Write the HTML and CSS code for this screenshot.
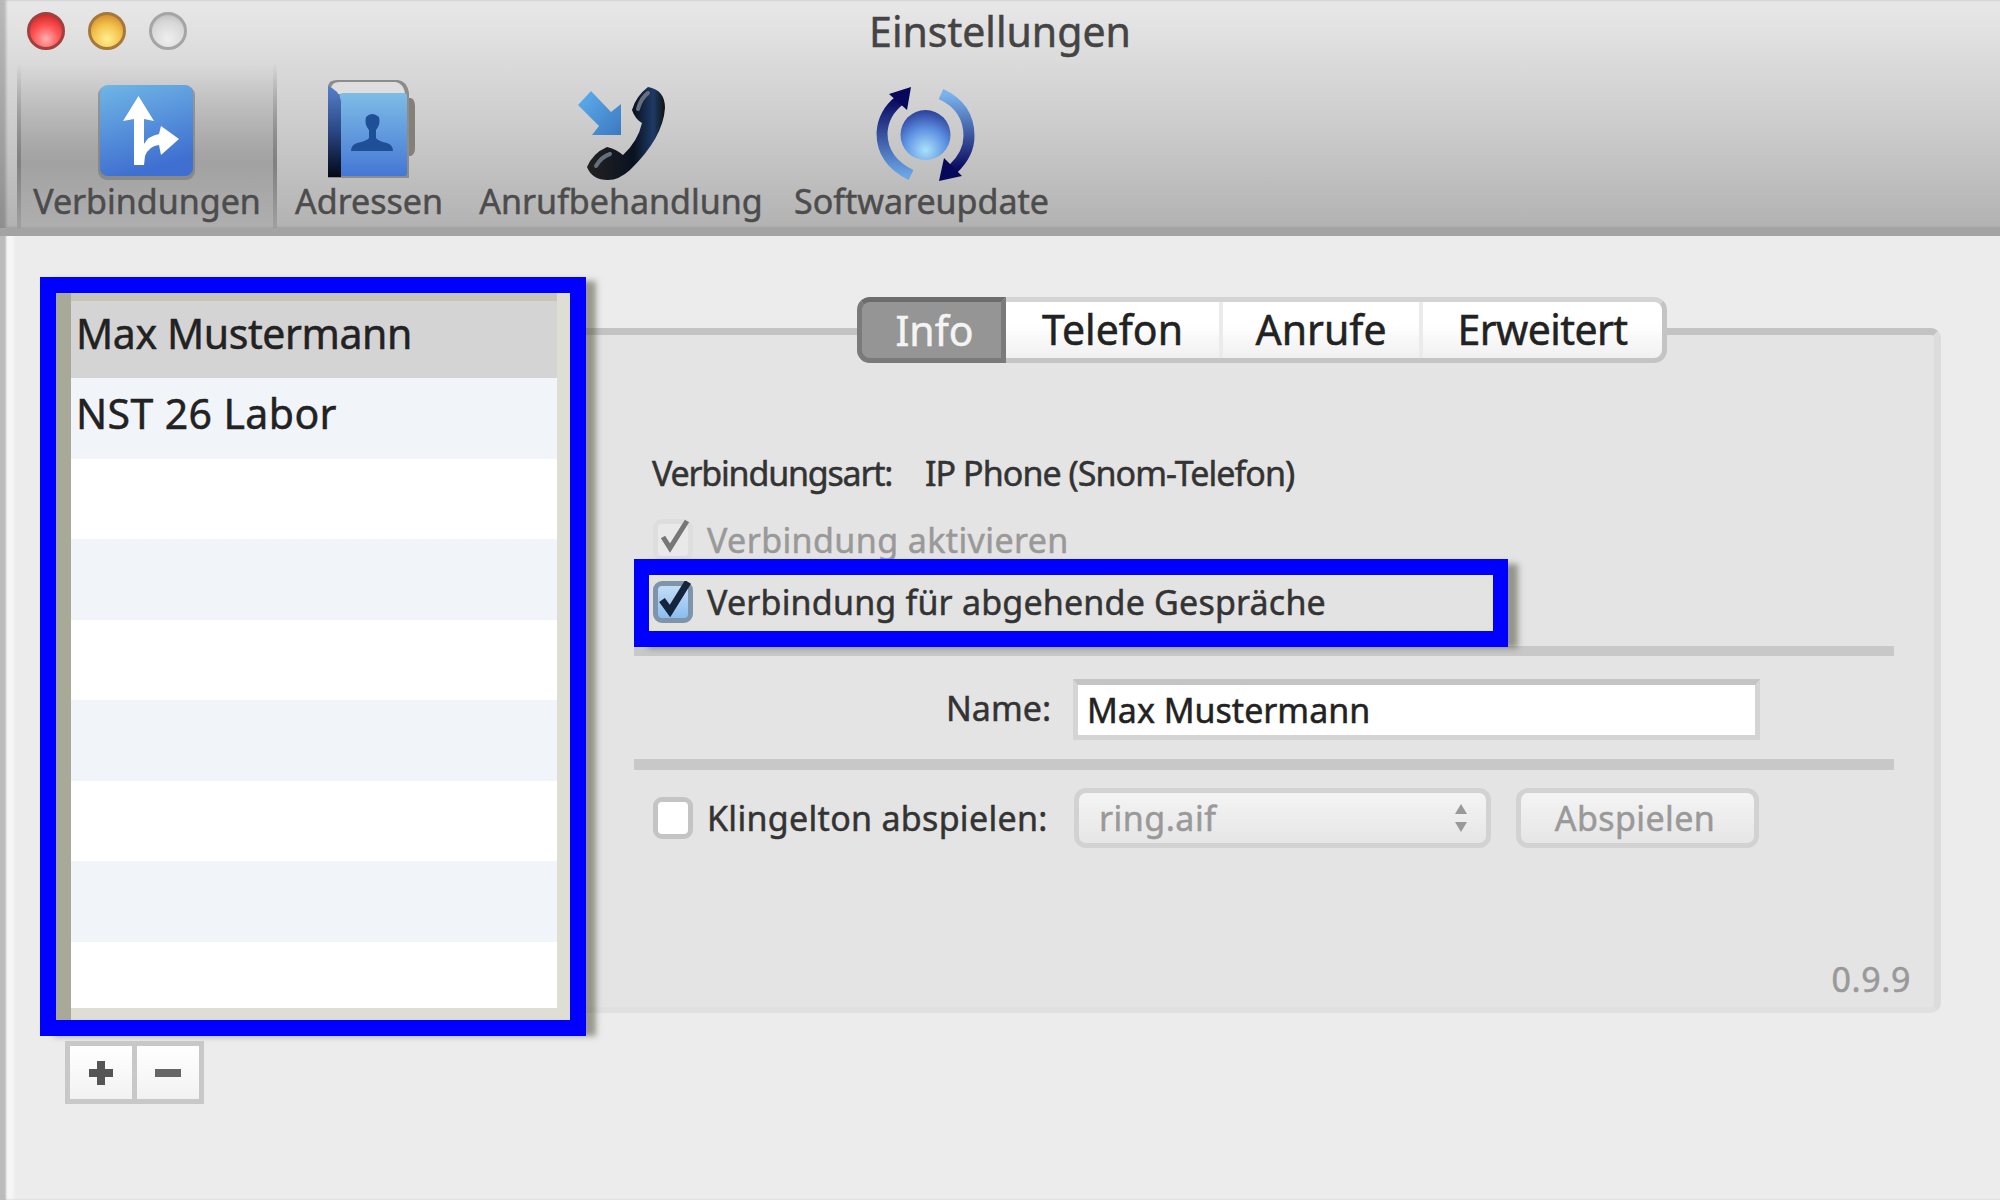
FILE: index.html
```
<!DOCTYPE html>
<html lang="de">
<head>
    <meta charset="UTF-8">
    <title>Einstellungen</title>
    <link rel="stylesheet" href="styles.css">
</head>
<body>
    <div class="window">
        <header class="header">
            <div class="titlebar">
                <div class="lights">
                    <span class="light red"></span>
                    <span class="light yellow"></span>
                    <span class="light gray"></span>
                </div>
                <h1 class="title">Einstellungen</h1>
            </div>
            <nav class="toolbar">
                <div class="tool tool-connections selected">
                    <svg class="icon" viewBox="0 0 110 110">
                        <defs>
                            <linearGradient id="sign" x1="0" y1="0" x2="0.3" y2="1">
                                <stop offset="0" stop-color="#6fb6e6"/>
                                <stop offset="1" stop-color="#3f6fd0"/>
                            </linearGradient>
                        </defs>
                        <rect x="6" y="10" width="97" height="94" rx="9" fill="#777" opacity="0.6"/>
                        <rect x="8" y="9" width="93" height="91" rx="8" fill="url(#sign)"/>
                        <path d="M46.5 20 L62 45 L52 43 L52 68 Q56 60 67 58 L69 50 L87 63 L69 79 L67 69 Q57 70 53 80 L52 89 L42 89 L42 43 L31 45 Z" fill="#fff"/>
                    </svg>
                    <span class="label">Verbindungen</span>
                </div>
                <div class="tool tool-addresses">
                    <svg class="icon" viewBox="0 0 110 110">
                        <defs>
                            <linearGradient id="cover" x1="0" y1="0" x2="0" y2="1">
                                <stop offset="0" stop-color="#7fbce6"/>
                                <stop offset="1" stop-color="#4477d4"/>
                            </linearGradient>
                            <linearGradient id="spine" x1="0" y1="0" x2="0" y2="1">
                                <stop offset="0" stop-color="#5580cc"/>
                                <stop offset="0.5" stop-color="#2b4684"/>
                                <stop offset="1" stop-color="#020816"/>
                            </linearGradient>
                        </defs>
                        <path d="M94 22 h3 q4 2 4 8 v42 q0 6 -4 8 h-3 z" fill="#847f79"/>
                        <path d="M14 10 Q15 4 23 4 H84 Q93 5 95 17 V102 H14 Z" fill="#8c8c8c"/>
                        <path d="M17 12 Q18 6 25 6 H82 Q90 8 91 18 H20 Z" fill="#dedede"/>
                        <rect x="26" y="17" width="67" height="83" rx="3" fill="url(#cover)"/>
                        <path d="M14 10 Q25 14 27 25 V101 H14 Z" fill="url(#spine)"/>
                        <path d="M52 41 Q58 35 65 41 Q67 48 62 54 V62 Q64 65 73 67 Q79 69 79 75 H37 Q37 69 43 67 Q53 65 55 62 V54 Q50 48 52 41 Z" fill="#1f4f96"/>
                    </svg>
                    <span class="label">Adressen</span>
                </div>
                <div class="tool tool-calls">
                    <svg class="icon" viewBox="0 0 110 110">
                        <defs>
                            <linearGradient id="arrow" x1="0" y1="0" x2="1" y2="1">
                                <stop offset="0" stop-color="#5fb0ee"/>
                                <stop offset="1" stop-color="#3c78c0"/>
                            </linearGradient>
                            <linearGradient id="phone" x1="0" y1="0" x2="1" y2="0">
                                <stop offset="0" stop-color="#222"/>
                                <stop offset="0.6" stop-color="#0a1220"/>
                                <stop offset="0.85" stop-color="#1d3a66"/>
                                <stop offset="1" stop-color="#111"/>
                            </linearGradient>
                        </defs>
                        <path d="M25 15 L45 36 L55 28 V59 H26 L33 50 L12 29 Z" fill="url(#arrow)"/>
                        <path d="M82 11 Q99 14 99 32 Q97 62 64 94 Q53 104 42 104 Q26 104 21 91 Q27 77 41 71 Q50 73 57 79 Q72 65 76 47 Q69 43 66 34 Q70 20 82 11 Z" fill="url(#phone)"/>
                        <path d="M72 33 Q75 22 82 17 M30 90 Q35 81 44 78" stroke="#66707c" stroke-width="4" fill="none" stroke-linecap="round"/>
                    </svg>
                    <span class="label">Anrufbehandlung</span>
                </div>
                <div class="tool tool-update">
                    <svg class="icon" viewBox="0 0 110 110">
                        <defs>
                            <radialGradient id="ball" cx="0.5" cy="0.8" r="0.8">
                                <stop offset="0" stop-color="#a9e2fb"/>
                                <stop offset="0.55" stop-color="#5b8ee0"/>
                                <stop offset="1" stop-color="#2b3f98"/>
                            </radialGradient>
                            <linearGradient id="arcLeft" x1="0" y1="0" x2="0" y2="1">
                                <stop offset="0" stop-color="#0a0a60"/>
                                <stop offset="1" stop-color="#6aa5e6"/>
                            </linearGradient>
                            <linearGradient id="arcRight" x1="0" y1="0" x2="0" y2="1">
                                <stop offset="0" stop-color="#7ab4ee"/>
                                <stop offset="1" stop-color="#0a0a60"/>
                            </linearGradient>
                        </defs>
                        <circle cx="58.5" cy="59" r="25" fill="url(#ball)"/>
                        <path d="M44 99 Q15 85 15 57 Q16 37 33 24" stroke="url(#arcLeft)" stroke-width="11" fill="none"/>
                        <path d="M74 18 Q102 31 102 60 Q102 78 86 93" stroke="url(#arcRight)" stroke-width="11" fill="none"/>
                        <path d="M44 11 L22 18 L40 34 Z" fill="#08085a"/>
                        <path d="M72 105 L95 100 L77 82 Z" fill="#08085a"/>
                    </svg>
                    <span class="label">Softwareupdate</span>
                </div>
            </nav>
        </header>

        <main class="content">
            <aside class="sidebar">
                <div class="list-frame">
                    <ul class="list">
                        <li class="active">Max Mustermann</li>
                        <li class="second">NST 26 Labor</li>
                        <li></li>
                        <li></li>
                        <li></li>
                        <li></li>
                        <li></li>
                        <li></li>
                        <li></li>
                    </ul>
                </div>
                <div class="list-buttons">
                    <button type="button" aria-label="Hinzufügen">
                        <svg width="28" height="28" viewBox="0 0 28 28"><path d="M14 2 V26 M2 14 H26" stroke="#555" stroke-width="8"/></svg>
                    </button>
                    <button type="button" aria-label="Entfernen">
                        <svg width="28" height="28" viewBox="0 0 28 28"><path d="M1 14 H27" stroke="#666" stroke-width="8"/></svg>
                    </button>
                </div>
            </aside>

            <section class="panel">
                <div class="tabs">
                    <span class="tab tab-info">Info</span>
                    <span class="tab tab-phone">Telefon</span>
                    <span class="tab tab-calls">Anrufe</span>
                    <span class="tab tab-more">Erweitert</span>
                </div>

                <div class="row row-type">
                    <span class="type-label">Verbindungsart:</span>
                    <span class="type-value">IP Phone (Snom-Telefon)</span>
                </div>

                <div class="row row-check disabled">
                    <span class="box box-disabled">
                        <svg viewBox="0 0 40 44"><path d="M10 18 L17 29 L34 2" stroke="#777" stroke-width="5" fill="none"/></svg>
                    </span>
                    <span class="check-text text-activate">Verbindung aktivieren</span>
                </div>

                <div class="row highlight">
                    <span class="box box-checked">
                        <svg viewBox="0 0 40 44"><path d="M9 19 L17 30 L35 1" stroke="#14243c" stroke-width="7" fill="none"/></svg>
                    </span>
                    <span class="check-text text-outgoing">Verbindung für abgehende Gespräche</span>
                </div>

                <div class="line line-top"></div>

                <div class="row row-name">
                    <label class="name-label" for="name">Name:</label>
                    <input class="name-input" type="text" id="name" value="Max Mustermann">
                </div>

                <div class="line line-bottom"></div>

                <div class="row row-ring">
                    <span class="box box-empty"></span>
                    <span class="check-text text-ring">Klingelton abspielen:</span>
                    <div class="select">
                        <span>ring.aif</span>
                        <svg width="14" height="30" viewBox="0 0 14 30"><path d="M7 1 L13 11 H1 Z M7 29 L13 19 H1 Z" fill="#999"/></svg>
                    </div>
                    <button class="play" type="button">Abspielen</button>
                </div>

                <div class="version">0.9.9</div>
            </section>
        </main>
    </div>
</body>
</html>
```
FILE: styles.css
```
* {
    box-sizing: border-box;
}

body {
    margin: 0;
    font-family: "Lucida Grande", "Noto Sans", sans-serif;
    font-size: 34px;
    color: #333;
    -webkit-text-stroke: 0.5px;
}

.window {
    width: 2000px;
    height: 1200px;
    overflow: hidden;
    background-color: #ececec;
    box-shadow: inset 6px 0 2px #bbb, inset 14px 0 3px #f6f6f6;
}

/* Title bar and toolbar */
.header {
    height: 236px;
    background: linear-gradient(#e8e8e8, #cfcfcf 50%, #b2b2b2);
    border-bottom: 8px solid #a3a3a3;
    box-shadow: inset 6px 0 3px rgba(0, 0, 0, 0.2);
}

.titlebar {
    display: grid;
    grid-template-columns: 1fr auto 1fr;
    height: 64px;
}

.lights {
    display: flex;
    gap: 23px;
    padding: 12px 0 0 27px;
}

.light {
    width: 38px;
    height: 38px;
    border-radius: 50%;
    border: 3px solid #999;
}

.red {
    background: radial-gradient(circle at 50% 75%, #ffb0b0, #f55 45%, #c01818);
    border-color: #a04040;
}

.yellow {
    background: radial-gradient(circle at 50% 75%, #fff090, #f3c14c 50%, #c67a20);
    border-color: #a5793c;
}

.gray {
    background: radial-gradient(circle at 50% 75%, #efefef, #d8d8d8 60%, #b4b4b4);
    border-color: #a5a5a5;
}

.title {
    margin: 0;
    font-size: 41px;
    font-weight: normal;
    line-height: 62px;
    color: #444;
}

.toolbar {
    display: flex;
    height: 164px;
    padding-left: 17px;
}

.tool {
    display: flex;
    flex-direction: column;
    align-items: center;
    padding-top: 12px;
    color: #4c4c4c;
}

.tool-connections { width: 260px; }
.tool-addresses { width: 184px; }
.tool-calls { width: 320px; }
.tool-update { width: 281px; }

.selected {
    background: linear-gradient(rgba(150, 150, 150, 0), rgba(150, 150, 150, 0.75) 60%, rgba(170, 170, 170, 0.5));
    border-left: 4px solid;
    border-right: 4px solid;
    border-image: linear-gradient(rgba(120, 120, 120, 0), rgba(120, 120, 120, 0.8) 60%, rgba(140, 140, 140, 0.4)) 1;
}

.icon {
    width: 110px;
    height: 110px;
}

.label {
    line-height: 30px;
    white-space: nowrap;
}

/* Connection list */
.content {
    display: flex;
    padding: 41px 0 0 40px;
}

.sidebar {
    position: relative;
    z-index: 1;
    width: 546px;
}

.list-frame {
    height: 759px;
    padding: 0 13px 12px 15px;
    border: 16px solid #00f;
    background: linear-gradient(to right, #a9a99a 15px, #deded4 15px);
    box-shadow: 12px 2px 6px -2px rgba(70, 70, 50, 0.5);
}

.list {
    height: 100%;
    margin: 0;
    padding: 0;
    list-style: none;
    overflow: hidden;
    font-size: 41px;
    color: #222;
}

.list li {
    height: 80.5px;
    padding-left: 5px;
    line-height: 70px;
    letter-spacing: -0.4px;
    background-color: #fff;
}

.list li:nth-child(even) {
    background-color: #f1f5fa;
}

.list li.active {
    height: 85px;
    line-height: 65px;
    background-color: #d4d4d4;
    border-top: 8px solid #c6c6ba;
}

.list li.second {
    letter-spacing: 0.4px;
}

.list-buttons {
    display: flex;
    width: 139px;
    height: 63px;
    margin: 5px 0 0 25px;
    border: 5px solid #c8c8c8;
}

.list-buttons button {
    flex: 1;
    display: flex;
    align-items: center;
    justify-content: center;
    padding: 0;
    border: none;
    background: linear-gradient(#fff, #f2f2f2);
}

.list-buttons button + button {
    border-left: 5px solid #c8c8c8;
}

/* Settings panel */
.panel {
    display: flex;
    flex-direction: column;
    width: 1355px;
    height: 685px;
    margin-top: 51px;
    padding: 0 40px 0 48px;
    background-color: #e4e4e4;
    border-top: 7px solid #c3c3c3;
    border-right: 7px solid #dcdcdc;
    border-bottom: 6px solid #e0e0e0;
    border-radius: 0 10px 10px 0;
}

.tabs {
    display: flex;
    flex: none;
    width: 810px;
    height: 66px;
    margin: -38px 0 83px 223px;
    border: 5px solid #c4c4c4;
    border-top-color: #d4d4d4;
    border-left: none;
    border-radius: 13px;
    background: linear-gradient(#fff 40%, #f0f0f0);
    font-size: 41px;
    line-height: 55px;
    text-align: center;
    color: #222;
}

.tab + .tab + .tab {
    border-left: 4px solid #ebebeb;
}

.tab-info {
    width: 149px;
    margin: -5px 0;
    padding: 1px 0 0 6px;
    border: 5px solid #7a7a7a;
    border-top-color: #6c6c6c;
    border-radius: 13px 0 0 13px;
    background-color: #959595;
    color: #f4f4f4;
}

.tab-phone { width: 213px; }
.tab-calls { width: 200px; }

.tab-more {
    flex: 1;
    letter-spacing: -0.6px;
}

.row {
    display: flex;
    flex: none;
    align-items: center;
    white-space: nowrap;
}

.row-type {
    height: 54px;
    padding-left: 18px;
}

.type-label {
    width: 273px;
    letter-spacing: -1.2px;
}

.type-value {
    letter-spacing: -0.95px;
}

.row-check {
    height: 54px;
    margin-top: 13px;
    padding-left: 19px;
}

.disabled {
    color: #999;
}

.text-activate {
    letter-spacing: 0.4px;
}

.text-outgoing {
    letter-spacing: 0.2px;
}

.box {
    flex: none;
    width: 40px;
    height: 42px;
    margin-right: 14px;
    border: 5px solid #c4c4c4;
    border-radius: 9px;
    background-color: #fff;
}

.box svg {
    display: block;
    width: 40px;
    height: 44px;
    margin: -5px;
}

.box-disabled {
    border-color: #dedede;
    background-color: #e9e9e9;
}

.box-checked {
    border-color: #7d94ac;
    background: linear-gradient(#c4ddf5, #8bbdf0);
}

.highlight {
    position: relative;
    width: 874px;
    height: 88px;
    margin-top: -8px;
    padding-left: 4px;
    padding-bottom: 2px;
    border: 16px solid #00f;
    border-width: 16px 15px;
    background-color: #e3e3e3;
    box-shadow: 12px 3px 6px -2px rgba(70, 70, 50, 0.5), inset 0 0 4px 3px #e4e4d0;
}

.line {
    flex: none;
    background-color: #c8c8c8;
}

.line-top {
    height: 10px;
    margin-top: -1px;
}

.line-bottom {
    height: 11px;
    margin: 19px 0 1px;
}

.row-name {
    height: 61px;
    margin-top: 23px;
}

.name-label {
    width: 417px;
    margin-right: 22px;
    padding-bottom: 3px;
    text-align: right;
}

.name-input {
    width: 687px;
    height: 61px;
    padding: 0 0 0 9px;
    border: 5px solid #d4d4d4;
    border-top: 6px solid #c4c4c4;
    background-color: #fff;
    font: inherit;
    color: #222;
}

.row-ring {
    height: 60px;
    margin-top: 17px;
    padding-left: 19px;
}

.text-ring {
    width: 367px;
    letter-spacing: 0.3px;
}

.select,
.play {
    height: 60px;
    border: 5px solid #d2d2d2;
    border-radius: 12px;
    background: linear-gradient(#f4f4f4, #e6e6e6);
    color: #999;
}

.select {
    display: flex;
    align-items: center;
    justify-content: space-between;
    width: 417px;
    padding: 0 18px 0 20px;
    line-height: 50px;
    letter-spacing: 0.5px;
}

.play {
    width: 243px;
    margin-left: 25px;
    padding: 0 5px 0 0;
    font: inherit;
    line-height: 50px;
    letter-spacing: 0.4px;
}

.version {
    margin: auto -17px 0 0;
    padding-bottom: 3px;
    line-height: 50px;
    letter-spacing: 0.6px;
    text-align: right;
    color: #999;
}
```
